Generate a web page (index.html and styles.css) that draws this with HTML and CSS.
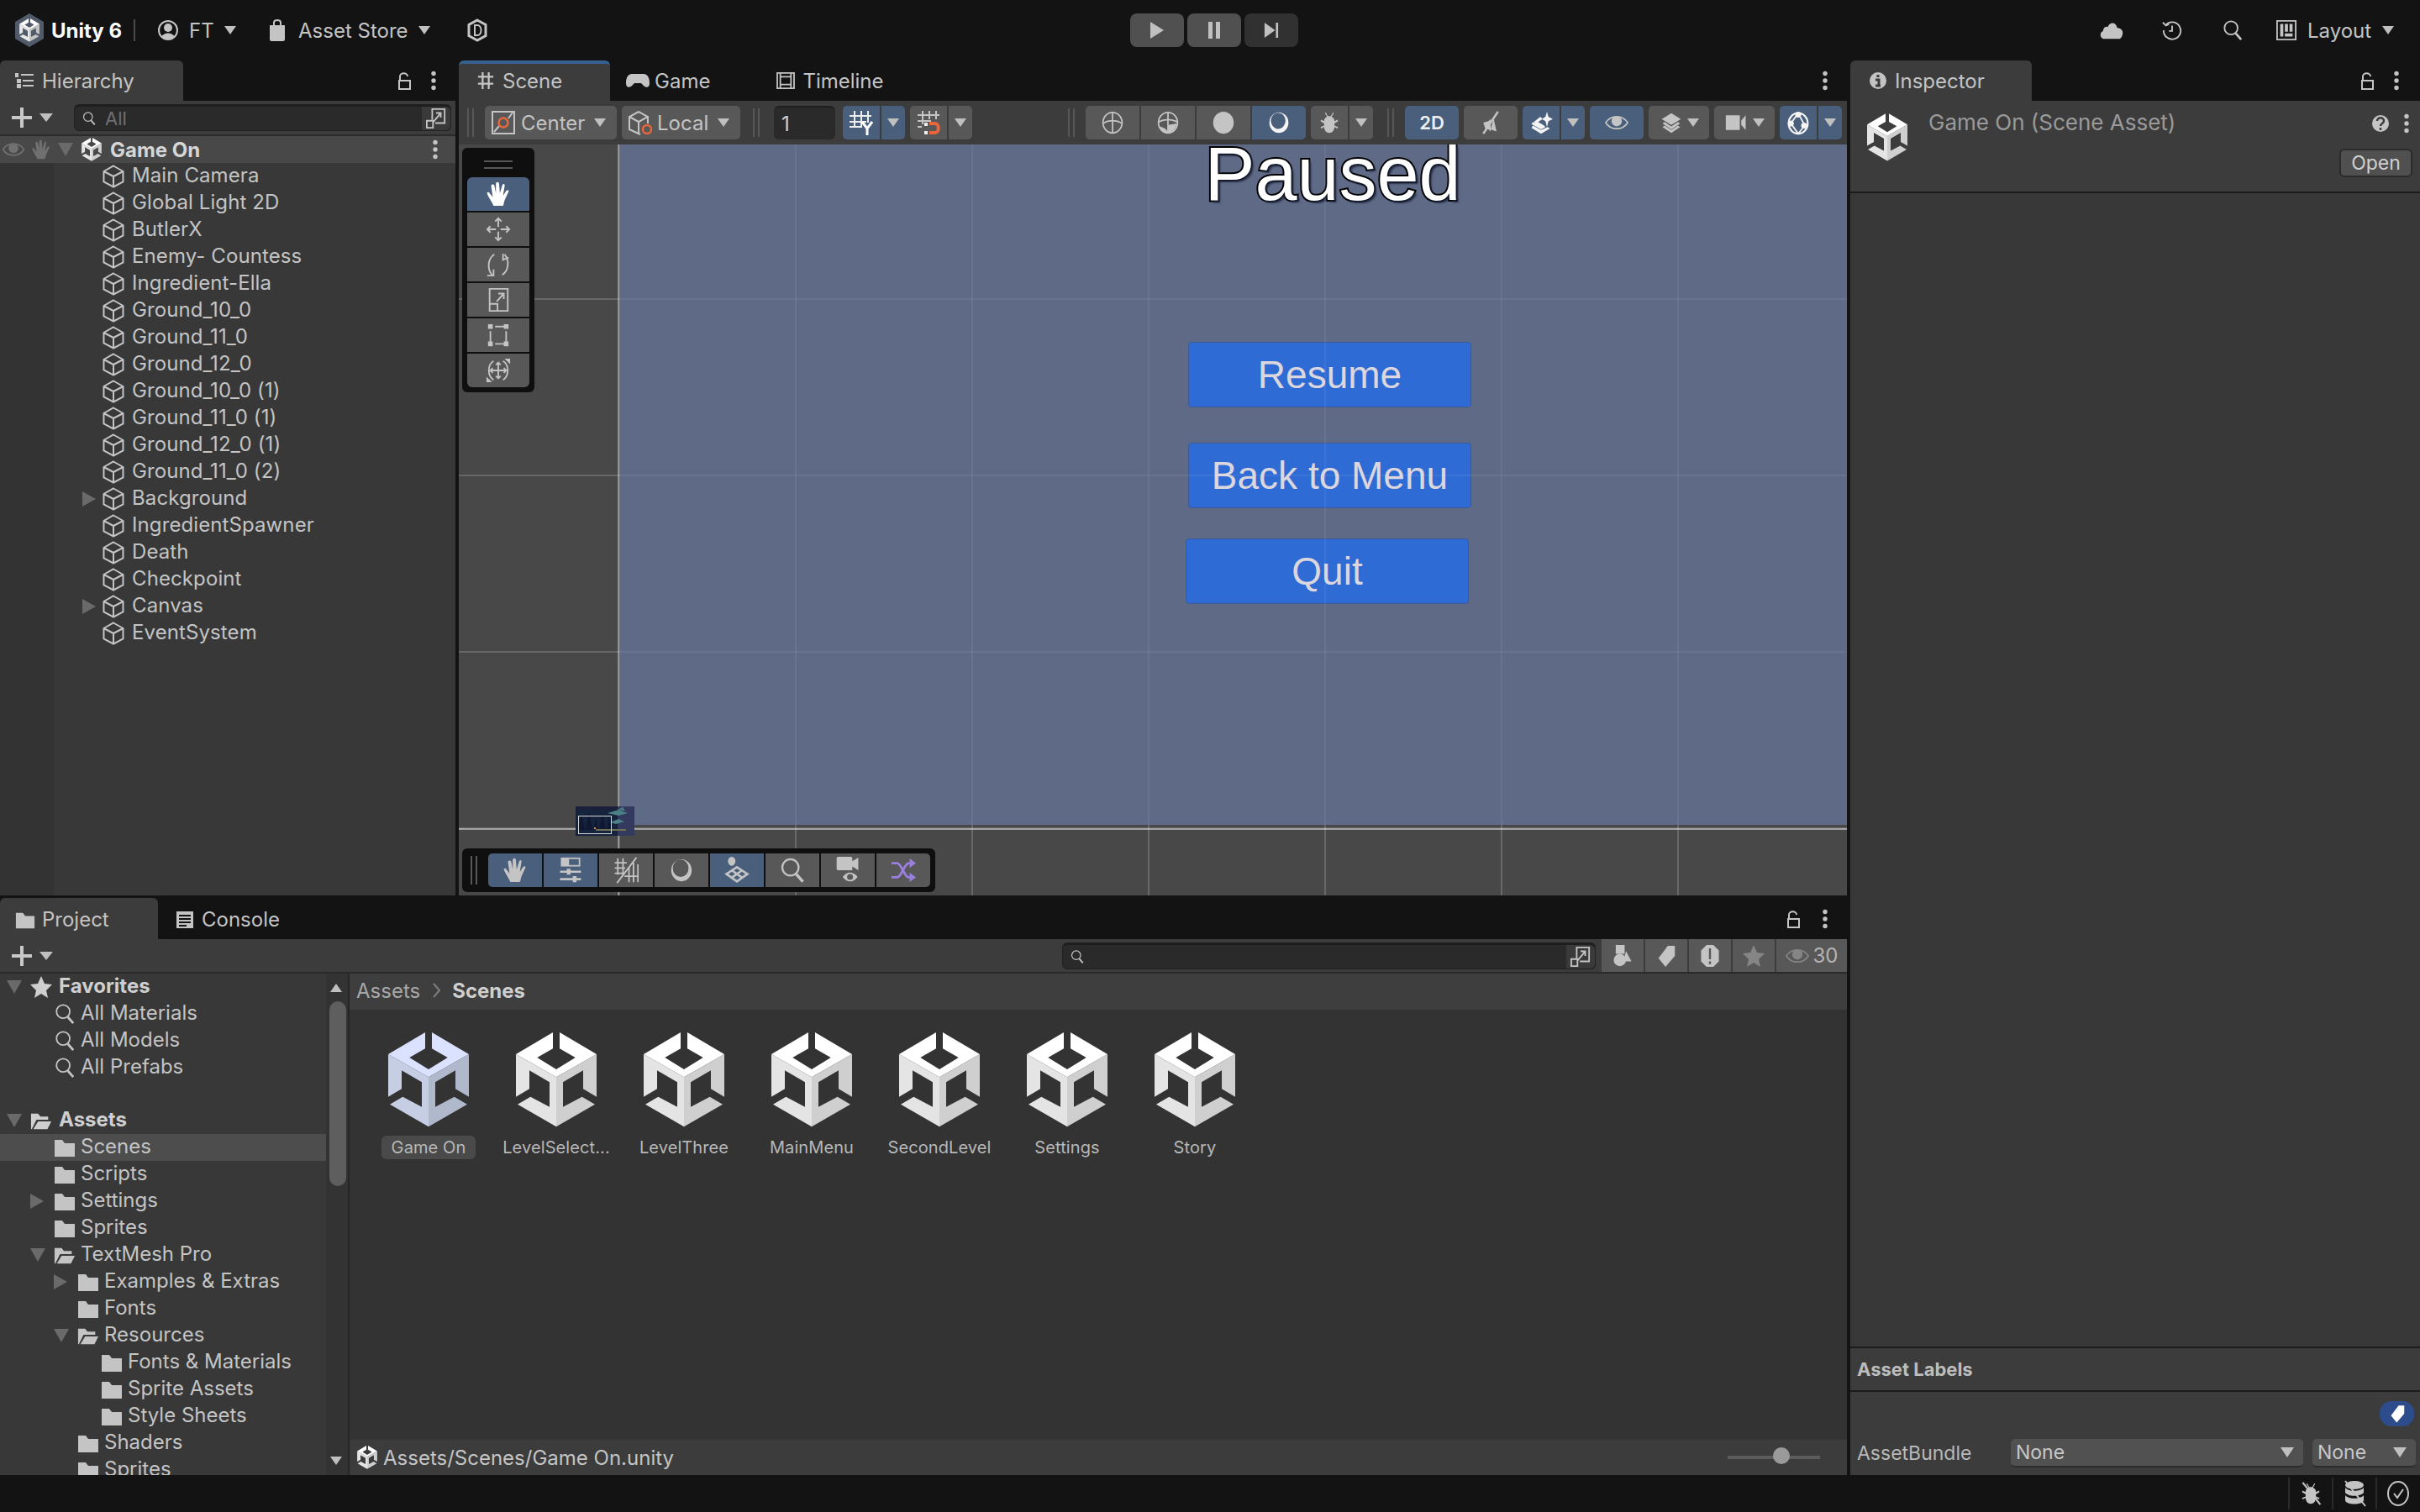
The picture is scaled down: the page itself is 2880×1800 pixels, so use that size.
FILE: index.html
```html
<!DOCTYPE html>
<html lang="en">
<head>
    <meta charset="UTF-8">
    <title>Unity 6 - Game On</title>
    <link rel="stylesheet" href="styles.css">
</head>
<body>
    <svg class="defs" width="0" height="0">
        <symbol id="logo" viewBox="0 0 96 113">
            <path class="logo-top" d="M44 0L0 26l48 27.300L96 26 52 0v19.300L70.700 30 48 44 25.300 30 44 19.300z"/>
            <path class="logo-left" d="M0 26v50.700l16-9.400v-22l24 14v29.400L17.300 76.700 2 85.700l46 26.600V53.300z"/>
            <path class="logo-right" d="M96 26v50.700l-16-9.400v-22l-24 14v29.400l22.700-12 15.300 9-46 26.600V53.300z"/>
        </symbol>
        <symbol id="cube" viewBox="0 0 26 28">
            <path d="M13 1.500L24.500 8v12.500L13 26.500 1.500 20.500V8zM1.500 8L13 14l11.500-6M13 14v12.500" fill="none" stroke="currentColor" stroke-width="2"/>
        </symbol>
        <symbol id="dots" viewBox="0 0 8 24">
            <circle cx="4" cy="3.500" r="2.700" fill="currentColor"/><circle cx="4" cy="12" r="2.700" fill="currentColor"/><circle cx="4" cy="20.500" r="2.700" fill="currentColor"/>
        </symbol>
        <symbol id="lock" viewBox="0 0 18 22">
            <path d="M3 10V6c0-5 9-5 9 0M2 11h13v10H2z" fill="none" stroke="currentColor" stroke-width="2"/>
        </symbol>
        <symbol id="folder" viewBox="0 0 26 24">
            <path d="M1 3h9l3 4h12v16H1z" fill="currentColor"/>
        </symbol>
        <symbol id="folder-open" viewBox="0 0 28 24">
            <path d="M1 23V3h9l3 4h10v4H8L2 23zM4 23l6-10h17l-5 10z" fill="currentColor"/>
        </symbol>
        <symbol id="search" viewBox="0 0 26 28">
            <circle cx="11" cy="11" r="8.500" fill="none" stroke="currentColor" stroke-width="2"/>
            <path d="M17 18l7 8" stroke="currentColor" stroke-width="3"/>
        </symbol>
        <symbol id="hand" viewBox="0 0 32 32">
            <path d="M10 31C8 26 4 21 2 16c-1-3 2-3 3-1l4 5L7 6c0-3 3-3 4-1l2 10 0-12c0-3 4-3 4 0l1 12 3-10c1-3 4-2 3 1l-2 12 4-6c2-2 4-1 3 1l-5 11c-1 3-1 5-2 7z" fill="currentColor"/>
        </symbol>
        <symbol id="move" viewBox="0 0 32 32">
            <path d="M16 2v11M16 19v11M2 16h11M19 16h11M12 6l4-4 4 4M12 26l4 4 4-4M6 12l-4 4 4 4M26 12l4 4-4 4" fill="none" stroke="currentColor" stroke-width="2"/>
        </symbol>
        <symbol id="rotate" viewBox="0 0 32 32">
            <path d="M11 3C2 9 2 22 8 29M21 29c9-6 9-19 3-26M2 30h8v-8M22 2v8l7-3" fill="none" stroke="currentColor" stroke-width="2"/>
        </symbol>
        <symbol id="scale" viewBox="0 0 32 32">
            <path d="M5 2h23v28H5zM5 21h10v9M14 18l9-10M16 8h7v7" fill="none" stroke="currentColor" stroke-width="2"/>
        </symbol>
        <symbol id="rect-tool" viewBox="0 0 32 32">
            <path d="M6 5v22M26 5v22M6 5h20M6 27h20" fill="none" stroke="currentColor" stroke-width="2" stroke-dasharray="14 6" stroke-dashoffset="-6"/>
            <path d="M3 2h6v6H3zM23 2h6v6h-6zM3 24h6v6H3zM23 24h6v6h-6z" fill="currentColor"/>
        </symbol>
        <symbol id="transform" viewBox="0 0 32 32">
            <path d="M10 4C2 9 2 23 10 28M22 4c8 5 8 19 0 24M16 6v20M6 16h20M13 9l3-3 3 3M13 23l3 3 3-3M9 13l-3 3 3 3M23 13l3 3-3 3" fill="none" stroke="currentColor" stroke-width="2"/>
            <path d="M24 1h7v7zM1 31v-7l7 7z" fill="currentColor"/>
        </symbol>
        <symbol id="globe" viewBox="0 0 32 32">
            <ellipse cx="16" cy="16" rx="13" ry="14" fill="none" stroke="currentColor" stroke-width="2"/>
            <path d="M16 2v28M3 17c8-5 18-5 26 0" fill="none" stroke="currentColor" stroke-width="2"/>
        </symbol>
        <symbol id="globe-half" viewBox="0 0 32 32">
            <ellipse cx="16" cy="16" rx="13" ry="14" fill="none" stroke="currentColor" stroke-width="2"/>
            <path d="M16 2v28M3 15c8-4 18-4 26 0" fill="none" stroke="currentColor" stroke-width="2"/>
            <path d="M4 21c6 2 10 2 12 9-6 0-10-4-12-9zM28 17c-1 7-6 12-12 13l0-11z" fill="currentColor"/>
        </symbol>
        <symbol id="moon" viewBox="0 0 32 32">
            <path fill-rule="evenodd" d="M3 16a13 14 0 1 0 26 0a13 14 0 1 0-26 0zM5 13.500a10 11 0 1 0 20 0a10 11 0 1 0-20 0z" fill="currentColor"/>
        </symbol>
        <symbol id="bug" viewBox="0 0 32 32">
            <path d="M11 2l3 5h4l3-5 1 1-3 5c4 2 4 4 4 6l4-2 1 2-5 3v3l5 2-1 2-4-2c0 3-2 8-7 8s-7-5-7-8l-4 2-1-2 5-2v-3L4 14l1-2 4 2c0-2 0-4 4-6l-3-5z" fill="currentColor"/>
        </symbol>
        <symbol id="fx" viewBox="0 0 32 32">
            <path d="M24 1l2 7 6 3-6 3-2 8-2-8-5-3 5-3z" fill="currentColor"/>
            <path d="M15 8l3 3-6 4 7 4 3 3-6 3L3 18l2-3 4 2-3-2zM3 23l13 8 12-7-3-2-9 4-11-6z" fill="currentColor"/>
        </symbol>
        <symbol id="eye" viewBox="0 0 32 24">
            <path d="M1 12C8 1 24 1 31 12 24 23 8 23 1 12z" fill="none" stroke="currentColor" stroke-width="2"/>
            <circle cx="16" cy="10" r="7" fill="currentColor"/>
        </symbol>
        <symbol id="layers" viewBox="0 0 32 32">
            <path d="M16 3l13 8-13 8-13-8z" fill="currentColor"/>
            <path d="M4 17l3-2 9 6 9-6 3 2-12 8zM4 22l3-2 9 6 9-6 3 2-12 8z" fill="currentColor"/>
        </symbol>
        <symbol id="camera" viewBox="0 0 32 32">
            <path d="M1 6h19v20H1zM22 13l6-7v20l-6-7z" fill="currentColor"/>
        </symbol>
        <symbol id="gizmo" viewBox="0 0 32 32">
            <ellipse cx="16" cy="17" rx="13" ry="14" fill="none" stroke="currentColor" stroke-width="2.500"/>
            <path d="M16 3L6 17l10 14 9-11z" fill="none" stroke="currentColor" stroke-width="2"/>
            <circle cx="16" cy="5" r="4" fill="currentColor"/><circle cx="6" cy="17" r="4" fill="currentColor"/><circle cx="24" cy="20" r="4" fill="currentColor"/>
        </symbol>
        <symbol id="expand" viewBox="0 0 26 28">
            <path d="M8 16V2h16v18H12M9 19L19 7M13 7h6v6" fill="none" stroke="currentColor" stroke-width="2"/>
            <path d="M1 17h8v9H1z" fill="none" stroke="currentColor" stroke-width="2"/>
        </symbol>
        <symbol id="tag" viewBox="0 0 24 28">
            <path d="M14 1h9v13l-12 14-9-11z" fill="currentColor"/>
        </symbol>
    </svg>

    <div class="app">
        <header class="topbar">
            <svg class="unity-mark" viewBox="0 0 34 40">
                <path d="M17 0l17 10v20L17 40 0 30V10z" fill="#515a68"/>
                <use href="#logo" class="mark-logo" x="5" y="6" width="24" height="28"/>
            </svg>
            <span class="brand">Unity 6</span>
            <span class="top-divider"></span>
            <svg class="top-account" viewBox="0 0 24 26">
                <circle cx="12" cy="13" r="11" fill="none" stroke="currentColor" stroke-width="2"/>
                <circle cx="12" cy="10" r="5" fill="currentColor"/>
                <path d="M4 21c3-6 13-6 16 0-4 4-12 4-16 0z" fill="currentColor"/>
            </svg>
            <span class="top-label ft">FT</span>
            <i class="caret top-caret-ft"></i>
            <svg class="top-bag" viewBox="0 0 20 26">
                <path d="M6 8V4c0-4 8-4 8 0v4" fill="none" stroke="currentColor" stroke-width="2"/>
                <path d="M1 7h18v17c0 1-1 2-2 2H3c-1 0-2-1-2-2z" fill="currentColor"/>
            </svg>
            <span class="top-label store">Asset Store</span>
            <i class="caret top-caret-store"></i>
            <svg class="top-hex" viewBox="0 0 24 28">
                <path d="M12 2l10 5.500v13L12 26 2 20.500v-13z" fill="none" stroke="currentColor" stroke-width="3"/>
                <path d="M9 8h3c6 0 6 12 0 12H9z" fill="none" stroke="currentColor" stroke-width="2"/>
            </svg>

            <div class="play-group">
                <button class="play-btn"><svg viewBox="0 0 18 20"><path d="M1 0l16 10L1 20z"/></svg></button>
                <button class="play-btn"><svg viewBox="0 0 18 20"><path d="M2 0h5v20H2zM11 0h5v20h-5z"/></svg></button>
                <button class="play-btn step"><svg viewBox="0 0 20 20"><path d="M1 0l14 10L1 20zM16 0h3v20h-3z"/></svg></button>
            </div>

            <svg class="top-cloud" viewBox="0 0 30 22"><path d="M6 22C0 22-1 14 4 12 5 6 9 6 10 7 12 0 21 0 22 8c6 0 9 5 6 11-1 2-2 3-4 3z" fill="currentColor"/></svg>
            <svg class="top-history" viewBox="0 0 26 26">
                <path d="M5 6a11 11 0 1 1-3 7M1 3l4 4 4-2M13 7v7h-4" fill="none" stroke="currentColor" stroke-width="2"/>
            </svg>
            <svg class="top-search"><use href="#search"/></svg>
            <svg class="top-layout" viewBox="0 0 26 26">
                <path d="M1 1h24v24H1z" fill="none" stroke="currentColor" stroke-width="2"/>
                <path d="M5 5h4v16H5zM11 5h4v10h-4zM17 5h4v10h-4zM11 17h10v4H11z" fill="currentColor"/>
            </svg>
            <span class="top-label layout-label">Layout</span>
            <i class="caret top-caret-layout"></i>
        </header>

        <div class="workspace">
            <div class="main-col">
                <div class="upper-row">
                    <section class="hierarchy">
                        <div class="tabbar">
                            <div class="tab active hierarchy-tab">
                                <svg class="tab-icon" viewBox="0 0 22 18"><path d="M0 1h3v3H0zM3 8h3v3H3zM3 14h3v3H3zM7 2h15M9 9h13M9 15h13" fill="currentColor" stroke="currentColor" stroke-width="2"/></svg>
                                <span>Hierarchy</span>
                            </div>
                            <div class="tab-actions">
                                <svg class="lock-icon"><use href="#lock"/></svg>
                                <svg class="dots-icon"><use href="#dots"/></svg>
                            </div>
                        </div>
                        <div class="hier-toolbar">
                            <span class="plus"></span>
                            <i class="caret plus-caret"></i>
                            <div class="search-field hier-search">
                                <svg class="mini-search"><use href="#search"/></svg>
                                <span class="search-hint">All</span>
                                <span class="search-expand"><svg><use href="#expand"/></svg></span>
                            </div>
                        </div>
                        <div class="hier-list">
                            <div class="scene-row">
                                <svg class="scene-eye"><use href="#eye"/></svg>
                                <svg class="scene-hand"><use href="#hand"/></svg>
                                <i class="arrow-down scene-arrow"></i>
                                <svg class="small-logo"><use href="#logo"/></svg>
                                <span class="scene-name">Game On</span>
                                <svg class="dots-icon scene-dots"><use href="#dots"/></svg>
                            </div>
                            <div class="hier-row"><svg class="cube"><use href="#cube"/></svg>Main Camera</div>
                            <div class="hier-row"><svg class="cube"><use href="#cube"/></svg>Global Light 2D</div>
                            <div class="hier-row"><svg class="cube"><use href="#cube"/></svg>ButlerX</div>
                            <div class="hier-row"><svg class="cube"><use href="#cube"/></svg>Enemy- Countess</div>
                            <div class="hier-row"><svg class="cube"><use href="#cube"/></svg>Ingredient-Ella</div>
                            <div class="hier-row"><svg class="cube"><use href="#cube"/></svg>Ground_10_0</div>
                            <div class="hier-row"><svg class="cube"><use href="#cube"/></svg>Ground_11_0</div>
                            <div class="hier-row"><svg class="cube"><use href="#cube"/></svg>Ground_12_0</div>
                            <div class="hier-row"><svg class="cube"><use href="#cube"/></svg>Ground_10_0 (1)</div>
                            <div class="hier-row"><svg class="cube"><use href="#cube"/></svg>Ground_11_0 (1)</div>
                            <div class="hier-row"><svg class="cube"><use href="#cube"/></svg>Ground_12_0 (1)</div>
                            <div class="hier-row"><svg class="cube"><use href="#cube"/></svg>Ground_11_0 (2)</div>
                            <div class="hier-row"><i class="arrow-right hier-arrow"></i><svg class="cube"><use href="#cube"/></svg>Background</div>
                            <div class="hier-row"><svg class="cube"><use href="#cube"/></svg>IngredientSpawner</div>
                            <div class="hier-row"><svg class="cube"><use href="#cube"/></svg>Death</div>
                            <div class="hier-row"><svg class="cube"><use href="#cube"/></svg>Checkpoint</div>
                            <div class="hier-row"><i class="arrow-right hier-arrow"></i><svg class="cube"><use href="#cube"/></svg>Canvas</div>
                            <div class="hier-row"><svg class="cube"><use href="#cube"/></svg>EventSystem</div>
                        </div>
                    </section>

                    <section class="scene-panel">
                        <div class="tabbar">
                            <div class="tab active scene-tab">
                                <svg class="tab-icon" viewBox="0 0 20 22"><path d="M6 0v22M14 0v22M0 6h20M0 15h20" stroke="currentColor" stroke-width="2.500"/></svg>
                                <span>Scene</span>
                            </div>
                            <div class="tab game-tab">
                                <svg class="tab-icon wide" viewBox="0 0 28 18"><path d="M7 1h14c5 0 7 5 7 11 0 6-5 6-8 2l-2-2h-8l-2 2c-3 4-8 4-8-2C0 6 2 1 7 1z" fill="currentColor"/></svg>
                                <span>Game</span>
                            </div>
                            <div class="tab timeline-tab">
                                <svg class="tab-icon" viewBox="0 0 24 22"><path d="M1 1h22v20H1zM5 1v20M19 1v20M5 6h14M5 16h14" fill="none" stroke="currentColor" stroke-width="2"/></svg>
                                <span>Timeline</span>
                            </div>
                            <div class="tab-actions"><svg class="dots-icon"><use href="#dots"/></svg></div>
                        </div>
                        <div class="scene-toolbar">
                            <span class="grip first-grip"></span>
                            <button class="tool-btn center-btn">
                                <svg class="btn-icon" viewBox="0 0 28 28"><path d="M1 1h26v26H1zM3 25l6-7M20 9l5-7" fill="none" stroke="#c4c4c4" stroke-width="2"/><circle cx="14" cy="14" r="5.500" fill="none" stroke="#e8663a" stroke-width="2.500"/></svg>
                                <span>Center</span><i class="caret"></i>
                            </button>
                            <button class="tool-btn local-btn">
                                <svg class="btn-icon" viewBox="0 0 28 30"><path d="M12 2l11 6v8M12 2L1 8v15l13 6M1 8l11 6 11-6M12 14v14" fill="none" stroke="#c4c4c4" stroke-width="2"/><circle cx="22" cy="23" r="5" fill="none" stroke="#e8663a" stroke-width="2.500"/></svg>
                                <span>Local</span><i class="caret"></i>
                            </button>
                            <span class="grip"></span>
                            <div class="number-field">1</div>
                            <div class="split active">
                                <button class="tool-btn split-main"><svg class="btn-icon" viewBox="0 0 28 30"><path d="M6 1v20M14 1v20M22 1v14M0 7h26M0 14h20M0 20h14" fill="none" stroke="#eee" stroke-width="2"/><path d="M15 14l6 8 6-8M21 22v8" fill="none" stroke="#fff" stroke-width="3"/></svg></button>
                                <button class="tool-btn split-caret"><i class="caret"></i></button>
                            </div>
                            <div class="split">
                                <button class="tool-btn split-main"><svg class="btn-icon" viewBox="0 0 28 30"><path d="M7 1v16M15 1v10M23 1v10M1 6h26M1 13h16M1 20h5" fill="none" stroke="#c4c4c4" stroke-width="2"/><path d="M15 16h7c5 0 5 11 0 11h-7" fill="none" stroke="#e8663a" stroke-width="4"/><path d="M9 15h4v4H9zM9 25h4v4H9z" fill="#eee"/></svg></button>
                                <button class="tool-btn split-caret"><i class="caret"></i></button>
                            </div>
                            <span class="toolbar-spacer"></span>
                            <span class="grip"></span>
                            <div class="joined">
                                <button class="tool-btn icon-btn"><svg class="btn-icon"><use href="#globe"/></svg></button>
                                <button class="tool-btn icon-btn"><svg class="btn-icon"><use href="#globe-half"/></svg></button>
                                <button class="tool-btn icon-btn"><svg class="btn-icon" viewBox="0 0 32 32"><ellipse cx="16" cy="16" rx="14" ry="15" fill="currentColor"/></svg></button>
                                <button class="tool-btn icon-btn on white"><svg class="btn-icon"><use href="#moon"/></svg></button>
                            </div>
                            <div class="split bug-split">
                                <button class="tool-btn split-main"><svg class="btn-icon"><use href="#bug"/></svg></button>
                                <button class="tool-btn split-caret"><i class="caret"></i></button>
                            </div>
                            <span class="grip bug-grip"></span>
                            <button class="tool-btn icon-btn on two-d">2D</button>
                            <button class="tool-btn icon-btn"><svg class="btn-icon" viewBox="0 0 32 32"><path d="M26 1L6 31" stroke="currentColor" stroke-width="3"/><path d="M6 16l7-2 3-3v17l-3-3H9zM20 10l4 18-8-3z" fill="currentColor"/></svg></button>
                            <div class="split active">
                                <button class="tool-btn split-main white"><svg class="btn-icon"><use href="#fx"/></svg></button>
                                <button class="tool-btn split-caret"><i class="caret"></i></button>
                            </div>
                            <button class="tool-btn icon-btn on"><svg class="btn-icon"><use href="#eye"/></svg></button>
                            <button class="tool-btn drop-btn"><svg class="btn-icon"><use href="#layers"/></svg><i class="caret"></i></button>
                            <button class="tool-btn drop-btn"><svg class="btn-icon"><use href="#camera"/></svg><i class="caret"></i></button>
                            <div class="split active gizmo-split">
                                <button class="tool-btn split-main white"><svg class="btn-icon"><use href="#gizmo"/></svg></button>
                                <button class="tool-btn split-caret"><i class="caret"></i></button>
                            </div>
                        </div>

                        <div class="scene-view">
                            <div class="game-rect">
                                <div class="paused">Paused</div>
                                <div class="ui-button resume">Resume</div>
                                <div class="ui-button back">Back to Menu</div>
                                <div class="ui-button quit">Quit</div>
                            </div>
                            <div class="scene-grid"></div>
                            <div class="axis-y"></div>
                            <div class="axis-x"></div>

                            <svg class="thumb" viewBox="0 0 70 35">
                                <rect width="70" height="35" fill="#1c1f3a"/>
                                <rect x="50" width="20" height="35" fill="#3a4168" opacity=".8"/>
                                <path d="M0 6l5-4 5 4 6-4 5 4 6-4 5 4 6-4 5 4 5-3v32H0z" fill="#16233c"/>
                                <path d="M3 28l4-18 4 18zM12 28l4-22 4 22zM21 28l3-14 3 14zM28 28l4-20 4 20zM37 28l3-16 3 16z" fill="#0f1830"/>
                                <path d="M38 8l13-4 11 4-11 3zM41 19l10-4 7 3-10 3zM50 4l6-3 3 4z" fill="#4b7f86"/>
                                <rect x="24" y="27" width="36" height="2" fill="#6d6f55"/>
                                <rect x="22" y="25" width="2" height="2" fill="#e8913a"/>
                                <rect x="3.500" y="11.500" width="39" height="21" fill="none" stroke="#d5d5d5"/>
                            </svg>

                            <div class="tool-palette">
                                <div class="palette-handle"></div>
                                <button class="palette-btn on"><svg><use href="#hand"/></svg></button>
                                <button class="palette-btn"><svg><use href="#move"/></svg></button>
                                <button class="palette-btn"><svg><use href="#rotate"/></svg></button>
                                <button class="palette-btn"><svg><use href="#scale"/></svg></button>
                                <button class="palette-btn"><svg><use href="#rect-tool"/></svg></button>
                                <button class="palette-btn"><svg><use href="#transform"/></svg></button>
                            </div>

                            <div class="overlay-bar">
                                <span class="grip overlay-grip"></span>
                                <button class="overlay-btn on"><svg><use href="#hand"/></svg></button>
                                <button class="overlay-btn on"><svg viewBox="0 0 32 36"><path d="M3 1h26v12H3z" fill="currentColor"/><path d="M14 3h13v8H14z" fill="#4a5f7b"/><path d="M2 20h28M2 30h28" stroke="currentColor" stroke-width="3"/><path d="M11 16h5v8h-5zM19 26h5v8h-5z" fill="currentColor"/></svg></button>
                                <button class="overlay-btn"><svg viewBox="0 0 32 36"><path d="M5 2v22M12 2v24M1 8h16M1 15h14M1 22h10M20 14v20M26 8v26M32 10v24M14 26h18M4 35L30 1" stroke="currentColor" stroke-width="2" fill="none"/></svg></button>
                                <button class="overlay-btn"><svg><use href="#moon"/></svg></button>
                                <button class="overlay-btn on"><svg viewBox="0 0 32 36"><ellipse cx="9" cy="6" rx="5" ry="6" fill="currentColor"/><path d="M16 14l14 9-14 10-14-10zM9 18l14 10M23 18L9 28" fill="none" stroke="currentColor" stroke-width="3"/></svg></button>
                                <button class="overlay-btn"><svg><use href="#search"/></svg></button>
                                <button class="overlay-btn"><svg viewBox="0 0 32 36"><path d="M3 0h17c2 0 2 2 2 2v4l8-5v17l-8-5v5H3c-2 0-2-2-2-2V2c0-2 2-2 2-2z" fill="currentColor"/><path d="M9 27c6-8 14-8 20 0-6 8-14 8-20 0z" fill="currentColor"/><circle cx="19" cy="27" r="4" fill="#585858"/></svg></button>
                                <button class="overlay-btn purple"><svg viewBox="0 0 32 30"><path d="M1 6h7c6 0 9 18 15 18h3M1 24h7c6 0 9-18 15-18h3" fill="none" stroke="currentColor" stroke-width="3"/><path d="M24 0l8 6-8 6zM24 18l8 6-8 6z" fill="currentColor"/></svg></button>
                            </div>
                        </div>
                    </section>
                </div>

                <section class="project">
                    <div class="tabbar">
                        <div class="tab active project-tab">
                            <svg class="tab-icon folder-tab"><use href="#folder"/></svg>
                            <span>Project</span>
                        </div>
                        <div class="tab console-tab">
                            <svg class="tab-icon console-icon" viewBox="0 0 20 22"><path d="M0 1h20v20H0z" fill="currentColor"/><path d="M3 6h14M3 10h14M3 14h14M3 18h9" stroke="#131313" stroke-width="2"/></svg>
                            <span>Console</span>
                        </div>
                        <div class="tab-actions">
                            <svg class="lock-icon"><use href="#lock"/></svg>
                            <svg class="dots-icon"><use href="#dots"/></svg>
                        </div>
                    </div>
                    <div class="project-toolbar">
                        <span class="plus"></span>
                        <i class="caret plus-caret"></i>
                        <div class="search-field project-search">
                            <svg class="mini-search"><use href="#search"/></svg>
                            <span class="search-expand"><svg><use href="#expand"/></svg></span>
                        </div>
                        <button class="filter-btn"><svg viewBox="0 0 26 32"><path d="M3 0h13v13H3z" fill="currentColor"/><circle cx="9" cy="22" r="9" fill="currentColor"/><path d="M18 9l8 15H14z" fill="currentColor"/></svg></button>
                        <button class="filter-btn"><svg><use href="#tag"/></svg></button>
                        <button class="filter-btn"><svg viewBox="0 0 26 32"><path d="M8 0h10l8 8v16l-8 8H8l-8-8V8z" fill="currentColor"/><path d="M13 5v16M13 24v4" stroke="#585858" stroke-width="3"/></svg></button>
                        <button class="filter-btn dim"><svg viewBox="0 0 26 26"><path d="M13 0l4 9 9 1-7 7 2 9-8-5-8 5 2-9-7-7 9-1z" fill="currentColor"/></svg></button>
                        <button class="filter-btn count dim"><svg class="count-eye"><use href="#eye"/></svg><span>30</span></button>
                    </div>
                    <div class="project-body">
                        <div class="tree">
                            <div class="tree-rows">
                                <div class="tree-row lvl0 strong"><i class="arrow-down"></i><svg class="tree-icon" viewBox="0 0 26 26"><path d="M13 0l4 9 9 1-7 7 2 9-8-5-8 5 2-9-7-7 9-1z" fill="currentColor"/></svg>Favorites</div>
                                <div class="tree-row lvl1"><i></i><svg class="tree-icon"><use href="#search"/></svg>All Materials</div>
                                <div class="tree-row lvl1"><i></i><svg class="tree-icon"><use href="#search"/></svg>All Models</div>
                                <div class="tree-row lvl1"><i></i><svg class="tree-icon"><use href="#search"/></svg>All Prefabs</div>
                                <div class="tree-row lvl0 strong tree-gap"><i class="arrow-down"></i><svg class="tree-icon"><use href="#folder-open"/></svg>Assets</div>
                                <div class="tree-row lvl1 selected"><i></i><svg class="tree-icon"><use href="#folder"/></svg>Scenes</div>
                                <div class="tree-row lvl1"><i></i><svg class="tree-icon"><use href="#folder"/></svg>Scripts</div>
                                <div class="tree-row lvl1"><i class="arrow-right"></i><svg class="tree-icon"><use href="#folder"/></svg>Settings</div>
                                <div class="tree-row lvl1"><i></i><svg class="tree-icon"><use href="#folder"/></svg>Sprites</div>
                                <div class="tree-row lvl1"><i class="arrow-down"></i><svg class="tree-icon"><use href="#folder-open"/></svg>TextMesh Pro</div>
                                <div class="tree-row lvl2"><i class="arrow-right"></i><svg class="tree-icon"><use href="#folder"/></svg>Examples &amp; Extras</div>
                                <div class="tree-row lvl2"><i></i><svg class="tree-icon"><use href="#folder"/></svg>Fonts</div>
                                <div class="tree-row lvl2"><i class="arrow-down"></i><svg class="tree-icon"><use href="#folder-open"/></svg>Resources</div>
                                <div class="tree-row lvl3"><i></i><svg class="tree-icon"><use href="#folder"/></svg>Fonts &amp; Materials</div>
                                <div class="tree-row lvl3"><i></i><svg class="tree-icon"><use href="#folder"/></svg>Sprite Assets</div>
                                <div class="tree-row lvl3"><i></i><svg class="tree-icon"><use href="#folder"/></svg>Style Sheets</div>
                                <div class="tree-row lvl2"><i></i><svg class="tree-icon"><use href="#folder"/></svg>Shaders</div>
                                <div class="tree-row lvl2"><i></i><svg class="tree-icon"><use href="#folder"/></svg>Sprites</div>
                            </div>
                            <div class="scrollbar">
                                <i class="scroll-up"></i>
                                <span class="scroll-thumb"></span>
                                <i class="scroll-down"></i>
                            </div>
                        </div>
                        <div class="assets-pane">
                            <div class="breadcrumb">
                                <span>Assets</span>
                                <svg class="crumb-sep" viewBox="0 0 10 18"><path d="M1 1l7 8-7 8" fill="none" stroke="currentColor" stroke-width="2"/></svg>
                                <b>Scenes</b>
                            </div>
                            <div class="asset-grid">
                                <div class="asset selected-asset"><svg class="asset-icon"><use href="#logo"/></svg><span>Game On</span></div>
                                <div class="asset"><svg class="asset-icon"><use href="#logo"/></svg><span>LevelSelect...</span></div>
                                <div class="asset"><svg class="asset-icon"><use href="#logo"/></svg><span>LevelThree</span></div>
                                <div class="asset"><svg class="asset-icon"><use href="#logo"/></svg><span>MainMenu</span></div>
                                <div class="asset"><svg class="asset-icon"><use href="#logo"/></svg><span>SecondLevel</span></div>
                                <div class="asset"><svg class="asset-icon"><use href="#logo"/></svg><span>Settings</span></div>
                                <div class="asset"><svg class="asset-icon"><use href="#logo"/></svg><span>Story</span></div>
                            </div>
                            <div class="path-bar">
                                <svg class="small-logo"><use href="#logo"/></svg>
                                <span>Assets/Scenes/Game On.unity</span>
                                <div class="zoom-slider"><span class="zoom-knob"></span></div>
                            </div>
                        </div>
                    </div>
                </section>
            </div>

            <aside class="inspector">
                <div class="tabbar">
                    <div class="tab active inspector-tab">
                        <svg class="tab-icon" viewBox="0 0 22 22"><circle cx="11" cy="11" r="10" fill="currentColor"/><path d="M11 4v3M8 10h4v7M8 17h6" stroke="#3c3c3c" stroke-width="3" fill="none"/></svg>
                        <span>Inspector</span>
                    </div>
                    <div class="tab-actions">
                        <svg class="lock-icon"><use href="#lock"/></svg>
                        <svg class="dots-icon"><use href="#dots"/></svg>
                    </div>
                </div>
                <div class="inspector-head">
                    <svg class="inspector-logo"><use href="#logo"/></svg>
                    <div class="inspector-title">Game On (Scene Asset)</div>
                    <svg class="help-icon" viewBox="0 0 22 22"><circle cx="11" cy="11" r="10" fill="currentColor"/><path d="M7 8c0-5 8-5 8 0 0 3-4 3-4 6M11 16v3" stroke="#3c3c3c" stroke-width="2.500" fill="none"/></svg>
                    <svg class="dots-icon head-dots"><use href="#dots"/></svg>
                    <button class="open-btn">Open</button>
                </div>
                <div class="inspector-empty"></div>
                <div class="labels-head">Asset Labels</div>
                <div class="labels-body">
                    <div class="tag-row"><span class="tag-badge"><svg><use href="#tag"/></svg></span></div>
                    <div class="bundle-row">
                        <span class="bundle-label">AssetBundle</span>
                        <div class="select bundle-main">None<i class="caret"></i></div>
                        <div class="select bundle-variant">None<i class="caret"></i></div>
                    </div>
                </div>
            </aside>
        </div>

        <footer class="statusbar">
            <span class="status-item"><svg viewBox="0 0 32 32"><use href="#bug"/><path d="M5 1l24 30" stroke="currentColor" stroke-width="2.500"/></svg></span>
            <span class="status-item"><svg viewBox="0 0 28 32"><ellipse cx="14" cy="6" rx="11" ry="5" fill="currentColor"/><path d="M3 9c4 5 18 5 22 0v6c-4 5-18 5-22 0zM3 18c4 5 18 5 22 0v6c0 6-22 6-22 0z" fill="currentColor"/><path d="M3 1l24 30" stroke="currentColor" stroke-width="2"/></svg></span>
            <span class="status-item"><svg viewBox="0 0 28 32"><ellipse cx="14" cy="16" rx="12" ry="14" fill="none" stroke="currentColor" stroke-width="2"/><path d="M9 16l4 5 7-10" fill="none" stroke="currentColor" stroke-width="2"/></svg></span>
        </footer>
    </div>
</body>
</html>
```

FILE: styles.css
```css
* {
    box-sizing: border-box;
}
html, body {
    margin: 0;
    padding: 0;
}
body {
    width: 2880px;
    height: 1800px;
    overflow: hidden;
    background-color: #131313;
    color: #c4c4c4;
    font-family: Inter, "Noto Sans", sans-serif;
    font-size: 24px;
}
button {
    font-family: inherit;
    color: inherit;
    border: none;
    padding: 0;
}
.defs {
    position: absolute;
}
.logo-top {
    fill: var(--logo-top, #fff);
}
.logo-left {
    fill: var(--logo-left, #e4e4e4);
}
.logo-right {
    fill: var(--logo-right, #cfcfcf);
}
.app {
    display: flex;
    flex-direction: column;
    height: 1800px;
}

/* top bar */
.topbar {
    display: flex;
    align-items: center;
    height: 72px;
    flex: none;
    color: #c4c4c4;
}
.unity-mark {
    width: 34px;
    height: 40px;
    margin-left: 18px;
}
.mark-logo {
    --logo-left: #e8e8e8;
    --logo-right: #c4c4c4;
}
.brand {
    margin-left: 9px;
    width: 80px;
    color: #fff;
    font-weight: 700;
    white-space: nowrap;
}
.top-divider {
    width: 2px;
    height: 26px;
    margin-left: 18px;
    background-color: #4a4a4a;
}
.top-account {
    width: 24px;
    height: 26px;
    margin-left: 27px;
}
.top-label {
    white-space: nowrap;
}
.ft {
    margin-left: 13px;
    width: 27px;
}
.top-caret-ft {
    margin-left: 15px;
}
.top-bag {
    width: 20px;
    height: 26px;
    margin-left: 39px;
}
.store {
    margin-left: 15px;
    width: 130px;
}
.top-caret-store {
    margin-left: 13px;
}
.top-hex {
    width: 24px;
    height: 28px;
    margin-left: 44px;
}
.play-group {
    display: flex;
    gap: 4px;
    margin-left: 765px;
}
.play-btn {
    display: flex;
    align-items: center;
    justify-content: center;
    width: 64px;
    height: 40px;
    border-radius: 8px;
    background-color: #505050;
}
.play-btn.step {
    background-color: #313131;
}
.play-btn svg {
    width: 18px;
    height: 20px;
    fill: #c0c0c0;
}
.top-cloud {
    width: 28px;
    height: 22px;
    margin-left: 954px;
}
.top-history {
    width: 24px;
    height: 26px;
    margin-left: 46px;
}
.top-search {
    width: 24px;
    height: 28px;
    margin-left: 48px;
}
.top-layout {
    width: 24px;
    height: 26px;
    margin-left: 40px;
}
.layout-label {
    margin-left: 13px;
    width: 76px;
}
.top-caret-layout {
    margin-left: 13px;
}

/* shared bits */
.caret {
    display: inline-block;
    flex: none;
    width: 0;
    height: 0;
    border-left: 7px solid transparent;
    border-right: 7px solid transparent;
    border-top: 10px solid #c0c0c0;
}
.arrow-down {
    display: inline-block;
    width: 0;
    height: 0;
    border-left: 9px solid transparent;
    border-right: 9px solid transparent;
    border-top: 16px solid #6a6a6a;
}
.arrow-right {
    display: inline-block;
    width: 0;
    height: 0;
    border-top: 9px solid transparent;
    border-bottom: 9px solid transparent;
    border-left: 16px solid #6a6a6a;
}
.tabbar {
    display: flex;
    height: 48px;
    flex: none;
    background-color: #131313;
}
.tab {
    display: flex;
    align-items: center;
    height: 48px;
    white-space: nowrap;
    border-radius: 6px 6px 0 0;
}
.tab.active {
    background-color: #3c3c3c;
}
.tab-icon {
    flex: none;
    width: 22px;
    height: 20px;
}
.tab-actions {
    display: flex;
    align-items: center;
    gap: 24px;
    margin-left: auto;
    padding-right: 22px;
}
.lock-icon {
    width: 18px;
    height: 22px;
}
.dots-icon {
    width: 8px;
    height: 24px;
}
.plus {
    position: relative;
    width: 24px;
    height: 24px;
    margin-left: 14px;
    flex: none;
    background: linear-gradient(#c8c8c8, #c8c8c8) center / 24px 4px no-repeat,
                linear-gradient(#c8c8c8, #c8c8c8) center / 4px 24px no-repeat;
}
.plus-caret {
    margin-left: 9px;
    border-left-width: 8px;
    border-right-width: 8px;
}
.search-field {
    display: flex;
    align-items: center;
    height: 32px;
    background-color: #2a2a2a;
    border: 1px solid #212121;
    border-top: 3px solid #1e1e1e;
    border-radius: 6px;
}
.mini-search {
    width: 16px;
    height: 18px;
    margin-left: 9px;
    flex: none;
}
.search-hint {
    margin-left: 11px;
    color: #6f6f6f;
    font-size: 22px;
}
.search-expand {
    display: flex;
    align-items: center;
    justify-content: center;
    width: 34px;
    height: 100%;
    margin-left: auto;
    background-color: #3a3a3a;
    border-radius: 0 6px 6px 0;
}
.search-expand svg {
    width: 24px;
    height: 26px;
}
.small-logo {
    width: 26px;
    height: 28px;
    flex: none;
}

/* hierarchy */
.workspace {
    display: flex;
    gap: 4px;
    height: 1684px;
    flex: none;
}
.main-col {
    width: 2198px;
    flex: none;
}
.upper-row {
    display: flex;
    gap: 4px;
    height: 994px;
    margin-bottom: 3px;
}
.hierarchy {
    display: flex;
    flex-direction: column;
    width: 542px;
    flex: none;
}
.hierarchy-tab {
    width: 218px;
    padding-left: 18px;
    gap: 10px;
}
.hierarchy .tab-actions {
    gap: 21px;
}
.hier-toolbar {
    display: flex;
    align-items: center;
    height: 42px;
    flex: none;
    background-color: #3c3c3c;
    border-bottom: 2px solid #2a2a2a;
}
.hier-search {
    width: 449px;
    margin-left: 25px;
}
.hier-list {
    flex: 1;
    background: linear-gradient(to right, #333333 64px, #383838 64px);
    overflow: hidden;
}
.scene-row {
    display: flex;
    align-items: center;
    height: 32px;
    background-color: #484848;
}
.scene-eye {
    width: 28px;
    height: 20px;
    margin-left: 2px;
    color: #707070;
}
.scene-hand {
    width: 24px;
    height: 26px;
    margin-left: 7px;
    color: #707070;
}
.scene-arrow {
    margin-left: 8px;
}
.scene-row .small-logo {
    margin-left: 9px;
}
.scene-name {
    margin-left: 9px;
    font-weight: 700;
    color: #d6d6d6;
}
.scene-dots {
    margin-left: auto;
    margin-right: 20px;
}
.hier-row {
    position: relative;
    display: flex;
    align-items: flex-start;
    height: 32px;
    line-height: 29px;
    padding-left: 122px;
    letter-spacing: 0.1px;
    white-space: nowrap;
}
.hier-arrow {
    position: absolute;
    left: 98px;
    top: 7px;
}
.cube {
    align-self: center;
    width: 26px;
    height: 28px;
    margin-right: 9px;
    flex: none;
}

/* scene */
.scene-panel {
    display: flex;
    flex-direction: column;
    flex: 1;
    min-width: 0;
}
.scene-tab {
    position: relative;
    width: 180px;
    padding-left: 21px;
    padding-bottom: 4px;
    gap: 9px;
    border-top: 4px solid #35608f;
}
.game-tab {
    margin-left: 19px;
    gap: 6px;
}
.tab-icon.wide {
    width: 28px;
    height: 18px;
}
.timeline-tab {
    margin-left: 79px;
    gap: 9px;
}
.scene-toolbar {
    display: flex;
    align-items: center;
    gap: 6px;
    height: 52px;
    flex: none;
    padding: 0 6px 0 10px;
    background-color: #3c3c3c;
}
.grip {
    flex: none;
    width: 8px;
    height: 34px;
    border-left: 2px solid #575757;
    border-right: 2px solid #575757;
}
.first-grip {
    margin-right: 7px;
}
.tool-btn {
    display: flex;
    align-items: center;
    height: 40px;
    flex: none;
    background-color: #585858;
    border-radius: 5px;
    color: #c4c4c4;
}
.btn-icon {
    width: 28px;
    height: 30px;
    flex: none;
}
.tool-btn span {
    font-size: 24px;
}
.center-btn {
    width: 157px;
    padding-left: 8px;
}
.center-btn span {
    margin-left: 7px;
}
.center-btn .caret,
.local-btn .caret {
    margin-left: 11px;
}
.local-btn {
    width: 141px;
    padding-left: 8px;
}
.local-btn span {
    margin-left: 6px;
}
.local-btn + .grip {
    margin: 0 11px 0 9px;
}
.number-field {
    display: flex;
    align-items: center;
    width: 73px;
    height: 40px;
    padding-left: 9px;
    margin-right: 3px;
    background-color: #2a2a2a;
    border-top: 2px solid #1e1e1e;
    border-radius: 6px;
    color: #d0d0d0;
}
.split {
    display: flex;
    gap: 2px;
    flex: none;
}
.split-main {
    justify-content: center;
    width: 44px;
    border-radius: 5px 0 0 5px;
}
.split-caret {
    justify-content: center;
    width: 28px;
    border-radius: 0 5px 5px 0;
}
.split.active .tool-btn,
.icon-btn.on {
    background-color: #4a5f7b;
}
.white {
    color: #f4f4f4;
}
.toolbar-spacer {
    flex: 1;
}
.joined {
    display: flex;
    gap: 2px;
    margin-left: 7px;
    flex: none;
}
.joined .tool-btn {
    border-radius: 0;
}
.joined .tool-btn:first-child {
    border-radius: 5px 0 0 5px;
}
.joined .tool-btn:last-child {
    border-radius: 0 5px 5px 0;
}
.icon-btn {
    justify-content: center;
    width: 64px;
}
.joined .icon-btn {
    width: 64px;
}
.bug-split .split-main {
    width: 44px;
}
.bug-grip {
    margin: 0 7px 0 11px;
}
.two-d {
    color: #f0f0f0;
    font-size: 22px;
    font-weight: 600;
}
.drop-btn {
    justify-content: center;
    gap: 5px;
    width: 72px;
}
.drop-btn .btn-icon {
    width: 28px;
    height: 30px;
}
.gizmo-split .split-main {
    width: 44px;
}
.scene-view {
    position: relative;
    flex: 1;
    overflow: hidden;
    background-color: #484848;
    /* the grid is stronger on the grey area than over the game canvas */
    background-image: linear-gradient(to right, rgba(255, 255, 255, 0.12) 2px, transparent 2px),
                      linear-gradient(to bottom, rgba(255, 255, 255, 0.12) 2px, transparent 2px);
    background-size: 210px 210px;
    background-position: 190px 183px;
}
.game-rect {
    position: absolute;
    left: 191px;
    top: 0;
    right: 0;
    height: 810px;
    background-color: #5f6a87;
}
.scene-grid {
    position: absolute;
    inset: 0;
    background-image: linear-gradient(to right, rgba(255, 255, 255, 0.06) 2px, transparent 2px),
                      linear-gradient(to bottom, rgba(255, 255, 255, 0.06) 2px, transparent 2px);
    background-size: 210px 210px;
    background-position: 190px 183px;
}
.axis-y {
    position: absolute;
    left: 189px;
    top: 0;
    bottom: 0;
    width: 2px;
    background-color: rgba(255, 255, 255, 0.35);
}
.axis-x {
    position: absolute;
    left: 0;
    right: 0;
    top: 814px;
    height: 2px;
    background-color: rgba(255, 255, 255, 0.45);
}
.paused {
    position: absolute;
    left: 694px;
    top: 1px;
    width: 310px;
    text-align: center;
    color: #fff;
    font-family: "Liberation Sans", Arial, sans-serif;
    font-size: 90px;
    line-height: 68px;
    white-space: nowrap;
    -webkit-text-stroke: 4px #000;
    paint-order: stroke fill;
    text-shadow: 3px 3px 2px rgba(30, 38, 60, 0.75);
}
.ui-button {
    position: absolute;
    display: flex;
    align-items: center;
    justify-content: center;
    width: 337px;
    height: 78px;
    background-color: #2f6bd4;
    border: 1px solid #3d5a94;
    border-radius: 4px;
    color: #dcd6de;
    font-family: "Liberation Sans", Arial, sans-serif;
    font-size: 46px;
}
.resume {
    left: 677px;
    top: 235px;
}
.back {
    left: 677px;
    top: 355px;
}
.quit {
    left: 674px;
    top: 469px;
}
.thumb {
    position: absolute;
    left: 139px;
    top: 788px;
    width: 70px;
    height: 35px;
}
.tool-palette {
    position: absolute;
    left: 4px;
    top: 4px;
    display: flex;
    flex-direction: column;
    gap: 2px;
    width: 86px;
    height: 291px;
    padding: 0 6px;
    background-color: #0f0f0f;
    border-radius: 6px;
}
.palette-handle {
    height: 33px;
    margin: 0 20px;
    background: linear-gradient(#575757, #575757) 0 15px / 100% 2px no-repeat,
                linear-gradient(#575757, #575757) 0 23px / 100% 2px no-repeat;
}
.palette-btn {
    display: flex;
    align-items: center;
    justify-content: center;
    height: 40px;
    flex: none;
    background-color: #585858;
    color: #c4c4c4;
}
.palette-btn:last-child {
    border-radius: 0 0 6px 6px;
}
.palette-btn.on {
    background-color: #4a5f7b;
    color: #fff;
    border-radius: 6px 6px 0 0;
}
.palette-btn svg {
    width: 30px;
    height: 30px;
}
.overlay-bar {
    position: absolute;
    left: 4px;
    bottom: 4px;
    display: flex;
    align-items: center;
    gap: 2px;
    height: 52px;
    padding: 0 6px 0 10px;
    background-color: #0f0f0f;
    border-radius: 6px;
}
.overlay-grip {
    margin-right: 11px;
}
.overlay-btn {
    display: flex;
    align-items: center;
    justify-content: center;
    width: 64px;
    height: 40px;
    background-color: #585858;
    color: #c4c4c4;
}
.overlay-btn:nth-of-type(1) {
    border-radius: 5px 0 0 5px;
}
.overlay-btn:last-child {
    border-radius: 0 5px 5px 0;
}
.overlay-btn.on {
    background-color: #4a5f7b;
}
.overlay-btn.purple {
    color: #9a7fe0;
}
.overlay-btn svg {
    width: 30px;
    height: 32px;
}

/* project */
.project {
    display: flex;
    flex-direction: column;
    height: 687px;
}
.project .tabbar {
    height: 49px;
}
.project-tab {
    width: 188px;
    height: 49px;
    padding-left: 18px;
    padding-top: 2px;
    gap: 8px;
}
.folder-tab {
    width: 24px;
    height: 24px;
}
.console-tab {
    margin-left: 22px;
    height: 49px;
    padding-top: 2px;
    gap: 10px;
    color: #c4c4c4;
}
.console-icon {
    width: 20px;
    height: 22px;
}
.project .tab-actions {
    gap: 24px;
}
.project-toolbar {
    display: flex;
    align-items: center;
    height: 41px;
    flex: none;
    background-color: #3c3c3c;
    border-bottom: 2px solid #2a2a2a;
}
.project-search {
    width: 635px;
    margin-left: auto;
    margin-right: 7px;
}
.filter-btn {
    display: flex;
    align-items: center;
    justify-content: center;
    width: 50px;
    height: 39px;
    margin-right: 2px;
    background-color: #585858;
    color: #c4c4c4;
}
.filter-btn svg {
    width: 26px;
    height: 26px;
}
.filter-btn.dim {
    color: #858585;
}
.filter-btn.count {
    width: 84px;
    margin-right: 0;
    gap: 5px;
    font-size: 24px;
}
.filter-btn.count span {
    color: #b4b4b4;
}
.filter-btn .count-eye {
    width: 28px;
    height: 22px;
}
.project-body {
    display: flex;
    flex: 1;
    min-height: 0;
}
.tree {
    display: flex;
    width: 416px;
    flex: none;
    background-color: #383838;
    border-right: 2px solid #252525;
    overflow: hidden;
}
.tree-rows {
    width: 388px;
    flex: none;
}
.tree-row {
    display: flex;
    align-items: flex-start;
    height: 32px;
    line-height: 30px;
    white-space: nowrap;
}
.tree-row i {
    align-self: center;
    flex: none;
    width: 0;
    margin-right: 28px;
}
.tree-row .arrow-down {
    margin-right: 10px;
}
.tree-row .arrow-right {
    margin-right: 12px;
}
.tree-icon {
    align-self: center;
    width: 26px;
    height: 26px;
    margin-right: 6px;
    flex: none;
}
.lvl0 {
    padding-left: 8px;
}
.lvl1 {
    padding-left: 36px;
}
.lvl2 {
    padding-left: 64px;
}
.lvl3 {
    padding-left: 92px;
}
.strong {
    font-weight: 700;
    color: #cfcfcf;
}
.strong .tree-icon {
    margin-right: 8px;
}
.tree-gap {
    margin-top: 31px;
}
.selected {
    background-color: #4d4d4d;
}
.scrollbar {
    position: relative;
    flex: 1;
    background-color: #333333;
}
.scroll-thumb {
    position: absolute;
    left: 4px;
    top: 33px;
    width: 20px;
    height: 220px;
    background-color: #5e5e5e;
    border-radius: 10px;
}
.scroll-up,
.scroll-down {
    position: absolute;
    left: 5px;
    width: 0;
    height: 0;
    border-left: 7px solid transparent;
    border-right: 7px solid transparent;
}
.scroll-up {
    top: 12px;
    border-bottom: 10px solid #c0c0c0;
}
.scroll-down {
    bottom: 12px;
    border-top: 10px solid #c0c0c0;
}
.assets-pane {
    display: flex;
    flex-direction: column;
    flex: 1;
    min-width: 0;
    background-color: #333333;
}
.breadcrumb {
    display: flex;
    align-items: center;
    height: 43px;
    flex: none;
    padding: 0 0 3px 8px;
    background-color: #3e3e3e;
    color: #a8a8a8;
}
.crumb-sep {
    width: 10px;
    height: 18px;
    margin: 0 13px 0 15px;
    color: #7e7e7e;
}
.breadcrumb b {
    color: #cfcfcf;
}
.asset-grid {
    display: flex;
    flex: 1;
    align-items: flex-start;
    padding: 27px 0 0 18px;
}
.asset {
    display: flex;
    flex-direction: column;
    align-items: center;
    width: 152px;
    flex: none;
    font-size: 20px;
    letter-spacing: 0.1px;
    color: #b8b8b8;
    white-space: nowrap;
}
.asset-icon {
    width: 96px;
    height: 113px;
    margin-bottom: 10px;
}
.asset span {
    display: block;
    height: 28px;
    line-height: 28px;
    padding: 0 12px;
    border-radius: 6px;
}
.selected-asset {
    --logo-top: #dbe2ff;
    --logo-left: #c6cee3;
    --logo-right: #b0b8cc;
}
.selected-asset span {
    width: 112px;
    padding: 0;
    text-align: center;
    background-color: #4a4a4a;
}
.path-bar {
    display: flex;
    align-items: center;
    height: 42px;
    flex: none;
    padding-left: 8px;
    background-color: #3c3c3c;
    white-space: nowrap;
}
.path-bar span {
    margin-left: 6px;
}
.zoom-slider {
    position: relative;
    width: 110px;
    height: 4px;
    margin-left: auto;
    margin-right: 32px;
    background-color: #5c5c5c;
}
.zoom-knob {
    position: absolute;
    left: 48px;
    top: -10px;
    width: 20px;
    height: 20px;
    margin: 0;
    background-color: #9a9a9a;
    border-radius: 50%;
}

/* inspector */
.inspector {
    display: flex;
    flex-direction: column;
    flex: 1;
    min-width: 0;
    background-color: #3c3c3c;
}
.inspector-tab {
    width: 216px;
    padding-left: 22px;
    gap: 9px;
}
.inspector-tab .tab-icon {
    width: 22px;
    height: 22px;
}
.inspector .tab-actions {
    gap: 21px;
    padding-right: 24px;
}
.inspector-head {
    position: relative;
    height: 110px;
    flex: none;
    border-bottom: 2px solid #1c1c1c;
}
.inspector-logo {
    position: absolute;
    left: 20px;
    top: 15px;
    width: 48px;
    height: 57px;
}
.inspector-title {
    position: absolute;
    left: 93px;
    top: 10px;
    color: #9a9a9a;
    font-size: 26px;
    white-space: nowrap;
}
.help-icon {
    position: absolute;
    left: 620px;
    top: 16px;
    width: 22px;
    height: 22px;
}
.head-dots {
    position: absolute;
    left: 658px;
    top: 15px;
}
.open-btn {
    position: absolute;
    right: 9px;
    top: 57px;
    width: 87px;
    height: 34px;
    background-color: #505050;
    border: 2px solid #2b2b2b;
    border-radius: 6px;
    font-size: 23px;
    color: #d0d0d0;
}
.inspector-empty {
    flex: 1;
    background-color: #383838;
}
.labels-head {
    display: flex;
    align-items: center;
    height: 54px;
    flex: none;
    padding-left: 8px;
    background-color: #3c3c3c;
    border-top: 2px solid #1c1c1c;
    border-bottom: 2px solid #1c1c1c;
    font-weight: 700;
    font-size: 22px;
    color: #bdbdbd;
}
.labels-body {
    height: 99px;
    flex: none;
}
.tag-row {
    display: flex;
    justify-content: flex-end;
    padding: 11px 7px 0 0;
}
.tag-badge {
    display: flex;
    align-items: center;
    justify-content: center;
    width: 41px;
    height: 30px;
    background-color: #2c4c8c;
    border-radius: 14px;
    color: #fff;
}
.tag-badge svg {
    width: 18px;
    height: 24px;
}
.bundle-row {
    display: flex;
    align-items: center;
    margin-top: 15px;
    padding-left: 8px;
}
.bundle-label {
    width: 183px;
    color: #b8b8b8;
    font-size: 23px;
}
.select {
    display: flex;
    align-items: center;
    justify-content: space-between;
    height: 34px;
    padding: 0 11px 0 6px;
    background-color: #515151;
    border-bottom: 2px solid #2c2c2c;
    border-radius: 5px;
    color: #c8c8c8;
    font-size: 23px;
}
.select .caret {
    border-left-width: 8px;
    border-right-width: 8px;
    border-top-width: 12px;
}
.bundle-main {
    width: 348px;
}
.bundle-variant {
    width: 123px;
    margin-left: 11px;
}

/* status bar */
.statusbar {
    display: flex;
    justify-content: flex-end;
    align-items: center;
    height: 44px;
    padding-right: 1px;
    background-color: #131313;
}
.status-item {
    display: flex;
    align-items: center;
    justify-content: center;
    width: 52px;
    height: 38px;
    border-left: 2px solid #2a2a2a;
    color: #c4c4c4;
}
.status-item svg {
    width: 28px;
    height: 32px;
}
```
